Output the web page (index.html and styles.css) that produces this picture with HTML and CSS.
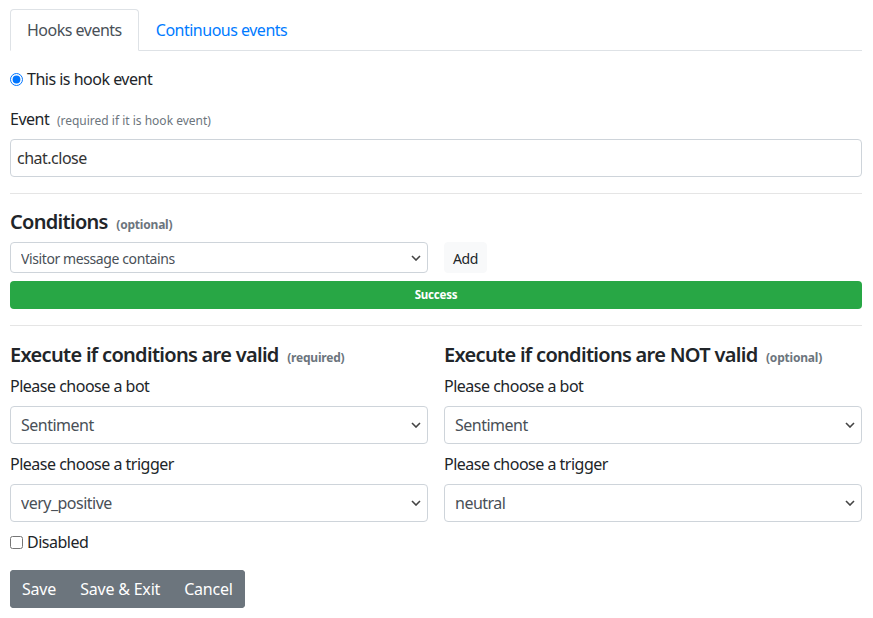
FILE: index.html
```html
<!DOCTYPE html>
<html>
<head>
<meta charset="utf-8">
<link rel="stylesheet" href="styles.css">
</head>
<body>
<div class="page">
  <ul class="tabs">
    <li class="tab active">Hooks events</li>
    <li class="tab link">Continuous events</li>
  </ul>
  <div class="tab-content">
    <label class="check-line"><input type="radio" checked> This is hook event</label>
    <div class="group">
      <label class="lbl">Event <small class="hint">(required if it is hook event)</small></label>
      <input class="control" type="text" value="chat.close">
    </div>
    <hr class="sep">
    <h4 class="heading">Conditions <small class="muted-b">(optional)</small></h4>
    <div class="cond-row">
      <select class="control sm"><option>Visitor message contains</option></select>
      <button class="btn-light">Add</button>
    </div>
    <div class="progress"><div class="bar">Success</div></div>
    <hr class="sep">
    <div class="cols">
      <div class="col">
        <h4 class="heading">Execute if conditions are valid <small class="muted-b">(required)</small></h4>
        <label class="lbl">Please choose a bot</label>
        <select class="control"><option>Sentiment</option></select>
        <label class="lbl">Please choose a trigger</label>
        <select class="control"><option>very_positive</option></select>
      </div>
      <div class="col">
        <h4 class="heading">Execute if conditions are NOT valid <small class="muted-b">(optional)</small></h4>
        <label class="lbl">Please choose a bot</label>
        <select class="control"><option>Sentiment</option></select>
        <label class="lbl">Please choose a trigger</label>
        <select class="control"><option>neutral</option></select>
      </div>
    </div>
    <label class="check-line disabled-line"><input type="checkbox"> Disabled</label>
    <div class="btn-group">
      <button class="btn">Save</button><button class="btn">Save &amp; Exit</button><button class="btn">Cancel</button>
    </div>
  </div>
</div>
</body>
</html>
```
FILE: styles.css
```css
* { box-sizing: border-box; }
html, body { margin: 0; padding: 0; background: #fff; }
body {
  font-family: "Segoe UI", "Noto Sans", "Open Sans", sans-serif;
  font-size: 16px;
  line-height: 24px;
  letter-spacing: -0.5px;
  color: #212529;
}
.page { width: 852px; margin: 9px 0 0 10px; }
.tabs {
  list-style: none; margin: 0; padding: 0;
  display: flex;
  border-bottom: 1px solid #dee2e6;
}
.tab {
  padding: 8px 16px;
  border: 1px solid transparent;
  border-top-left-radius: 4px;
  border-top-right-radius: 4px;
  margin-bottom: -1px;
}
.tab.active {
  color: #495057;
  border-color: #dee2e6 #dee2e6 #fff;
  background: #fff;
}
.tab.link { color: #007bff; }
.tab-content { padding-top: 16px; }
.check-line { display: flex; align-items: center; gap: 4px; height: 24px; }
.check-line input { margin: 0; width: 13px; height: 13px; }
.group { margin-top: 16px; }
.lbl { display: block; margin-bottom: 8px; height: 24px; }
small { line-height: 1; }
.hint { font-size: 12px; color: #6c757d; margin-left: 4px; letter-spacing: 0; }
.muted-b { font-size: 12px; color: #6c757d; font-weight: 700; margin-left: 4px; letter-spacing: -0.2px; }
.control {
  display: block;
  width: 100%;
  height: 38px;
  padding: 6px 12px;
  font: inherit;
  letter-spacing: -0.5px;
  color: #495057;
  background: #fff;
  border: 1px solid #ced4da;
  border-radius: 4px;
}
input.control { padding-left: 6px; color: #333; }
select.control {
  -webkit-appearance: none;
  appearance: none;
  padding-left: 10px;
  background-image: url("data:image/svg+xml,%3Csvg xmlns='http://www.w3.org/2000/svg' width='10' height='6' viewBox='0 0 10 6'%3E%3Cpath d='M1 1l4 4 4-4' fill='none' stroke='%23444' stroke-width='1.6'/%3E%3C/svg%3E");
  background-repeat: no-repeat;
  background-position: right 6px center;
  background-size: 10px 6px;
}
.control.sm { height: 31px; font-size: 14px; padding: 4px 10px; letter-spacing: -0.4px; }
.sep { margin: 16px 0; border: 0; border-top: 1px solid rgba(0,0,0,.1); }
.heading {
  margin: 0 0 8px;
  font-size: 20px;
  line-height: 24px;
  height: 24px;
  font-weight: 600;
  letter-spacing: -0.7px;
}
.cond-row { display: flex; gap: 16px; align-items: center; }
.cond-row .control { width: 418px; }
.btn-light {
  height: 31px;
  padding: 4px 8px;
  font: inherit;
  font-size: 14px;
  letter-spacing: -0.4px;
  color: #212529;
  background: #f8f9fa;
  border: 1px solid #f8f9fa;
  border-radius: 4px;
}
.progress {
  margin-top: 8px;
  height: 28px;
  border-radius: 4px;
  overflow: hidden;
  background: #e9ecef;
}
.bar {
  height: 100%;
  background: #28a745;
  color: #fff;
  font-size: 11.5px;
  font-weight: 700;
  letter-spacing: -0.2px;
  display: flex;
  align-items: center;
  justify-content: center;
}
.cols { display: grid; grid-template-columns: 1fr 1fr; gap: 16px; }
.col .heading { margin-top: 1px; margin-bottom: 7px; }
.col .control { margin-bottom: 8px; }
.btn-group { display: inline-flex; margin-top: 16px; border-radius: 4px; overflow: hidden; background: #6c757d; }
.btn {
  font: inherit;
  letter-spacing: -0.2px;
  height: 38px;
  padding: 6px 12px;
  color: #fff;
  background: #6c757d;
  border: 0;
}
```
